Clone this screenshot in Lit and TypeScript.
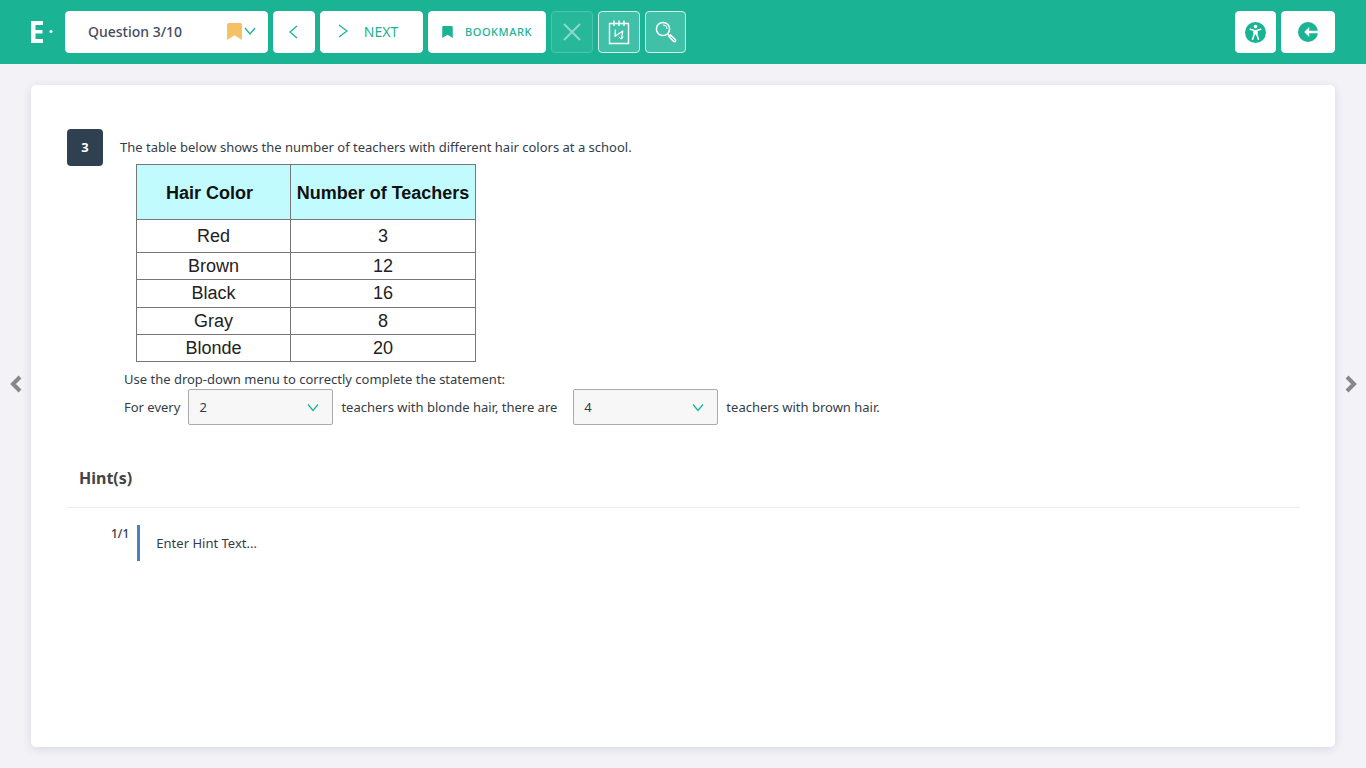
import { LitElement, html, css, svg } from "lit";
import { customElement, state } from "lit/decorators.js";

const chevronDown = html`<svg class="chevron" viewBox="0 0 12 8" aria-hidden="true">
  <path d="M1 1 L6 7 L11 1" fill="none" stroke="currentColor" stroke-width="1.3" />
</svg>`;

const flag = svg`<path d="M0 1.5 Q0 0 1.5 0 H12.5 Q14 0 14 1.5 V16 L7 11.5 L0 16 Z" fill="currentColor" />`;

@customElement("tool-bar")
export class ToolBar extends LitElement {
  static styles = css`
    :host {
      display: block;
      background: #1ab394;
      color: #1ab394;
    }
    * {
      box-sizing: border-box;
    }
    .bar {
      display: flex;
      align-items: center;
      gap: 5px;
      height: 64px;
      padding: 0 31px;
    }
    .logo {
      width: 22px;
      height: 22px;
      margin-right: 7px;
      flex: none;
    }
    .box {
      display: flex;
      align-items: center;
      justify-content: center;
      flex: none;
      width: 42px;
      height: 42px;
      margin: 0;
      padding: 0;
      border: 1px solid #fff;
      border-radius: 4px;
      background: #fff;
      color: inherit;
      font-family: "Noto Sans", "Open Sans", sans-serif;
    }
    .box.slim {
      width: 41px;
    }
    .box.picker {
      display: grid;
      grid-template-columns: 1fr auto;
      width: 203px;
    }
    .picker select {
      grid-area: 1 / 1 / 2 / 3;
      width: 100%;
      height: 100%;
      padding: 0 22px 2px;
      border: 0;
      background: none;
      appearance: none;
      color: #434b5d;
      font: 500 14px "Noto Sans", "Open Sans", sans-serif;
    }
    .marks {
      grid-area: 1 / 2;
      display: flex;
      align-items: center;
      gap: 2px;
      padding: 0 11px 2px 0;
      pointer-events: none;
    }
    .marks .flag {
      width: 15px;
      height: 17px;
      color: #f4c165;
    }
    .chevron {
      width: 12px;
      height: 8px;
    }
    .box.next {
      width: 103px;
      gap: 16px;
      padding: 0 7px 2px 0;
      font-size: 14px;
    }
    .box.bookmark {
      width: 118px;
      gap: 12px;
      padding-bottom: 2px;
      font-size: 11px;
      font-weight: 500;
      letter-spacing: 0.05em;
    }
    .bookmark .flag {
      width: 11px;
      height: 12px;
      margin-top: 2px;
    }
    .arrow {
      width: 10px;
      height: 14px;
    }
    .ghost {
      background: #40c0a7;
      border-color: #d4f1ea;
      color: #fff;
    }
    .ghost[disabled] {
      background: #27b799;
      border-color: #4ac4ac;
      color: #8cd9c9;
    }
    .gap {
      flex: 1;
    }
    .box.exit {
      width: 54px;
    }
  `;

  render() {
    return html`<header class="bar">
      <svg class="logo" viewBox="0 0 22 22" role="img" aria-label="Logo">
        <path d="M0 0 H12 V4 H4.5 V9 H11.5 V12.5 H4.5 V18 H12 V22 H0 Z" fill="#fff" />
        <circle cx="20" cy="10.5" r="1.6" fill="#fff" />
      </svg>
      <div class="box picker">
        <select aria-label="Question">
          <option>Question 3/10</option>
        </select>
        <span class="marks">
          <svg class="flag" viewBox="0 0 14 16" aria-hidden="true">${flag}</svg>${chevronDown}
        </span>
      </div>
      <button class="box" aria-label="Previous">
        <svg class="arrow" viewBox="0 0 10 14" aria-hidden="true">
          <path d="M8 1 L1 7 L8 13" fill="none" stroke="currentColor" stroke-width="1.3" />
        </svg>
      </button>
      <button class="box next">
        <svg class="arrow" viewBox="0 0 10 14" aria-hidden="true">
          <path d="M1 1 L9 7 L1 13" fill="none" stroke="currentColor" stroke-width="1.3" />
        </svg>
        NEXT
      </button>
      <button class="box bookmark">
        <svg class="flag" viewBox="0 0 14 16" aria-hidden="true">${flag}</svg>
        BOOKMARK
      </button>
      <button class="box ghost" disabled aria-label="Cross out">
        <svg width="18" height="18" viewBox="0 0 18 18" aria-hidden="true">
          <path d="M1 1 L17 17 M17 1 L1 17" stroke="currentColor" stroke-width="2" />
        </svg>
      </button>
      <button class="box ghost" aria-label="Scratchpad">
        <svg width="22" height="26" viewBox="0 0 22 26" fill="none" stroke="currentColor" aria-hidden="true">
          <path d="M1.5 4.5 H20.5 V24.5 H1.5 Z" stroke-width="1.4" />
          <path d="M6 1.5 V7 M11 1.5 V7 M16 1.5 V7" stroke-width="1.4" />
          <path d="M7.5 10.5 L7 17.2 L14.8 12 L13.4 20" stroke-width="1.3" stroke-linejoin="round" />
          <path d="M10.8 18 L13.4 20 L15.4 17.6" stroke-width="1" />
        </svg>
      </button>
      <button class="box slim ghost" aria-label="Magnify">
        <svg width="22" height="22" viewBox="0 0 22 22" fill="none" stroke="currentColor" aria-hidden="true">
          <circle cx="8" cy="8" r="6.6" stroke-width="1.5" />
          <path d="M8 4 A4 4 0 0 1 12 8" stroke-width="1.2" />
          <path d="M12.6 12.8 L14.6 14.8" stroke-width="1.5" />
          <path d="M14 15.6 L15.6 14 L20.2 18.4 Q21 19.6 20.3 20.3 Q19.4 21 18.4 20.2 Z" stroke-width="1.6" />
        </svg>
      </button>
      <span class="gap"></span>
      <button class="box slim" aria-label="Accessibility">
        <svg width="21" height="21" viewBox="0 0 20 20" aria-hidden="true">
          <circle cx="10" cy="10" r="10" fill="currentColor" />
          <circle cx="10" cy="4.4" r="1.7" fill="#fff" />
          <path d="M5 7 L8.8 8.2 V11.6 L7.2 16.4 M15 7 L11.2 8.2 V11.6 L12.8 16.4" fill="none" stroke="#fff" stroke-width="1.5" stroke-linecap="round" stroke-linejoin="round" />
          <path d="M8.2 7.6 H11.8 V12 H8.2 Z" fill="#fff" />
        </svg>
      </button>
      <button class="box exit" aria-label="Exit">
        <svg width="20" height="20" viewBox="0 0 20 20" aria-hidden="true">
          <circle cx="10" cy="10" r="10" fill="currentColor" />
          <path d="M6.5 10 L11 5.5 V9 H20 V11 H11 V14.5 Z" fill="#fff" stroke="#fff" stroke-width="0.5" />
        </svg>
      </button>
    </header>`;
  }
}

@customElement("app-root")
export class AppRoot extends LitElement {
  static styles = css`
    :host {
      display: flex;
      flex-direction: column;
      min-height: 100vh;
      background: #f2f2f7;
      color: #343c49;
      font: 13px/20px "Noto Sans", "Open Sans", sans-serif;
    }
    * {
      box-sizing: border-box;
    }
    .stage {
      flex: 1;
      display: grid;
      grid-template-columns: 31px 1fr 31px;
      padding: 21px 0;
    }
    .side {
      display: flex;
      align-items: center;
      justify-content: center;
      padding: 0;
      border: 0;
      background: none;
      color: #88888b;
      /* centres the arrows on the window rather than on the area under the bar */
      padding-bottom: 64px;
    }
    .card {
      padding: 44px 35px 44px 36px;
      border-radius: 5px;
      background: #fff;
      box-shadow: 0 2px 10px rgba(40, 40, 70, 0.12);
    }
    .question {
      display: flex;
      align-items: flex-start;
      gap: 17px;
    }
    .number {
      flex: none;
      width: 36px;
      height: 37px;
      border-radius: 4px;
      background: #2f4050;
      color: #fff;
      font-weight: 700;
      line-height: 37px;
      text-align: center;
    }
    p {
      margin: 0;
    }
    .intro {
      padding-top: 8px;
    }
    table {
      margin: 7px 0 7px 16px;
      border-collapse: collapse;
      color: #222;
      font: 18px/20px "Liberation Sans", Arial, sans-serif;
      text-align: center;
    }
    th,
    td {
      padding: 3px 0;
      border: 1px solid #777;
    }
    th {
      width: 185px;
      padding: 18px 0 16px;
      background: #c2fbfe;
      color: #111;
      font-weight: 700;
    }
    th:first-child {
      width: 154px;
      padding-right: 8px;
    }
    tbody tr:first-child td {
      padding: 6px 0;
    }
    tbody tr:nth-child(3) td {
      padding-bottom: 4px;
    }
    .answer {
      padding-left: 4px;
    }
    .blank {
      display: flex;
      flex-wrap: wrap;
      align-items: center;
      gap: 8px;
    }
    .drop {
      display: grid;
      grid-template-columns: 1fr auto;
      align-items: center;
      width: 145px;
      height: 36px;
    }
    .drop select {
      grid-area: 1 / 1 / 2 / 3;
      width: 100%;
      height: 100%;
      padding: 0 10px;
      border: 1px solid #aaa;
      border-radius: 2px;
      background: #f7f7f7;
      appearance: none;
      color: inherit;
      font: inherit;
    }
    .drop .chevron {
      grid-area: 1 / 2;
      width: 12px;
      height: 9px;
      margin-right: 14px;
      color: #1ab394;
      pointer-events: none;
    }
    .second {
      margin-left: 8px;
    }
    .hints {
      margin-top: 42px;
    }
    h2 {
      margin: 0;
      padding: 0 12px 18px;
      border-bottom: 1px solid #eee;
      color: #444;
      font-size: 16px;
      line-height: 22px;
    }
    .hint {
      display: flex;
      align-items: flex-start;
      gap: 8px;
      padding: 17px 0 0 44px;
    }
    .count {
      font-size: 12px;
      font-weight: 500;
      line-height: 18px;
    }
    .text {
      padding: 8px 16px;
      border-left: 3px solid #4a7fc4;
    }
  `;

  @state() private rows: [string, number][] = [
    ["Red", 3],
    ["Brown", 12],
    ["Black", 16],
    ["Gray", 8],
    ["Blonde", 20],
  ];

  private drop(value: string, label: string, extra = "") {
    return html`<span class="drop ${extra}">
      <select aria-label=${label}>
        <option>${value}</option>
      </select>
      ${chevronDown}
    </span>`;
  }

  render() {
    return html`
      <tool-bar></tool-bar>
      <main class="stage">
        <button class="side" aria-label="Previous question">
          <svg width="12" height="18" viewBox="0 0 12 18" aria-hidden="true">
            <path d="M10 2 L3 9 L10 16" fill="none" stroke="currentColor" stroke-width="4" />
          </svg>
        </button>
        <section class="card">
          <div class="question">
            <span class="number">3</span>
            <div>
              <p class="intro">The table below shows the number of teachers with different hair colors at a school.</p>
              <table>
                <thead>
                  <tr>
                    <th>Hair Color</th>
                    <th>Number of Teachers</th>
                  </tr>
                </thead>
                <tbody>
                  ${this.rows.map(([color, n]) => html`<tr><td>${color}</td><td>${n}</td></tr>`)}
                </tbody>
              </table>
              <div class="answer">
                <p>Use the drop-down menu to correctly complete the statement:</p>
                <div class="blank">
                  <span>For every</span>
                  ${this.drop("2", "Teachers with blonde hair")}
                  <span>teachers with blonde hair, there are</span>
                  ${this.drop("4", "Teachers with brown hair", "second")}
                  <span>teachers with brown hair.</span>
                </div>
              </div>
            </div>
          </div>
          <div class="hints">
            <h2>Hint(s)</h2>
            <div class="hint">
              <span class="count">1/1</span>
              <div class="text">Enter Hint Text...</div>
            </div>
          </div>
        </section>
        <button class="side" aria-label="Next question">
          <svg width="12" height="18" viewBox="0 0 12 18" aria-hidden="true">
            <path d="M2 2 L9 9 L2 16" fill="none" stroke="currentColor" stroke-width="4" />
          </svg>
        </button>
      </main>
    `;
  }
}
